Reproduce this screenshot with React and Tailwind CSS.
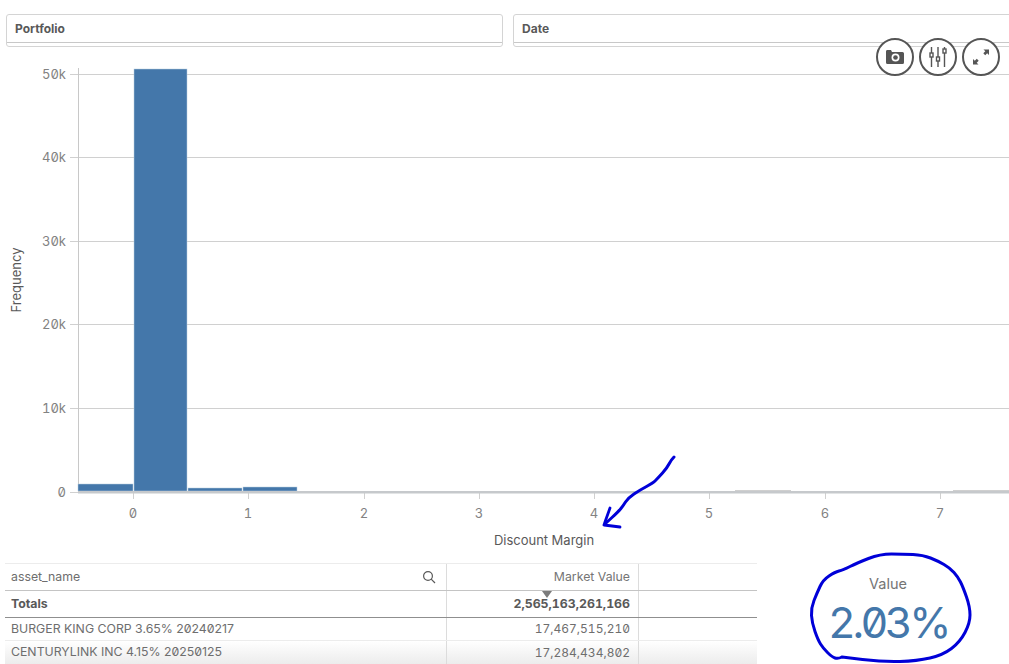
import React from "react";

const FONT = "font-['Inter','Liberation_Sans',sans-serif]";
const NUM = "'Inter','Liberation Sans',sans-serif";

const Y_TICKS = [
  ["50k", 18],
  ["40k", 101],
  ["30k", 185],
  ["20k", 268],
  ["10k", 352],
];
const X_TICKS = [
  ["0", 133],
  ["1", 248],
  ["2", 364],
  ["3", 479],
  ["4", 594],
  ["5", 709],
  ["6", 825],
  ["7", 940],
];
const BARS = [
  [78, 55, 428],
  [134, 53, 13],
  [188, 54, 432],
  [243, 54, 431],
];

// pen strokes, traced from the picture
const ARROW = [[674, 457], [671, 460], [667, 468], [658, 478], [653, 483], [640, 490], [628, 498], [623, 506], [618, 512], [606, 523]];
const CIRCLE = [[842, 657], [838, 659], [832, 657], [823, 648], [818, 640], [812, 623], [811, 608], [817, 593], [823, 580], [835, 572], [843, 570], [857, 563], [880, 554], [903, 554], [923, 555], [938, 561], [950, 568], [958, 577], [963, 587], [970, 607], [970, 623], [960, 642], [943, 655], [917, 661], [883, 662], [842, 657]];

// Helper: smooth a list of points through their midpoints
const smoothPath = (pts) => {
  let d = `M${pts[0][0]} ${pts[0][1]}`;
  for (let i = 1; i < pts.length - 1; i++) {
    const mx = (pts[i][0] + pts[i + 1][0]) / 2;
    const my = (pts[i][1] + pts[i + 1][1]) / 2;
    d += ` Q${pts[i][0]} ${pts[i][1]} ${mx} ${my}`;
  }
  const last = pts[pts.length - 1];
  return `${d} L${last[0]} ${last[1]}`;
};

const FilterBox = ({ label, className }) => (
  <div className={`h-[33px] shrink-0 rounded-[3px] border border-[#d4d4d4] bg-white ${className}`}>
    <div className="h-[28px] border-b border-[#c8c8c8] pl-2 pt-[6px] text-[12px] leading-4 font-bold text-[#595959]">
      {label}
    </div>
  </div>
);

const Histogram = () => (
  <svg width="1009" height="504" className="block shrink-0" style={{ fontFamily: NUM, fontVariantNumeric: "slashed-zero tabular-nums" }}>
    {Y_TICKS.map(([label, y]) => (
      <g key={label}>
        <line x1="70" x2="1009" y1={y + 0.5} y2={y + 0.5} stroke="#d0d0d0" />
        <text x="66" y={y + 5} textAnchor="end" fontSize="13" fill="#828282">{label}</text>
      </g>
    ))}
    <line x1="78.5" x2="78.5" y1="12" y2="436" stroke="#c8c8c8" />
    <line x1="70" x2="78" y1="436.5" y2="436.5" stroke="#d0d0d0" />
    <text x="66" y="441" textAnchor="end" fontSize="13" fill="#828282">0</text>
    {X_TICKS.map(([label, x]) => (
      <g key={label}>
        <line x1={x + 0.5} x2={x + 0.5} y1="436" y2="443" stroke="#d0d0d0" />
        <text x={x} y="462" textAnchor="middle" fontSize="13" fill="#828282">{label}</text>
      </g>
    ))}
    {BARS.map(([x, w, y]) => (
      <rect key={x} x={x} y={y} width={w} height={435 - y} fill="#4477aa" stroke="#b9cde0" strokeWidth="0.5" />
    ))}
    <rect x="735" y="434" width="56" height="3" fill="#cfcfcf" />
    <rect x="953" y="434" width="56" height="3" fill="#cfcfcf" />
    <rect x="78" y="435" width="931" height="2.5" fill="#c6c9cc" />
    <text x="544" y="489" textAnchor="middle" fontSize="13" fill="#595959">Discount Margin</text>
    <text transform="translate(21 224) rotate(-90)" textAnchor="middle" fontSize="13" fill="#595959">Frequency</text>
  </svg>
);

const Cell = ({ className = "", children }) => (
  <div className={`flex items-center overflow-hidden px-[6px] ${className}`}>{children}</div>
);

const ResultTable = () => (
  <div className="relative w-[752px] shrink-0 text-[12.3px] text-[#595959]">
    <div className="grid h-[28px] grid-cols-[442px_192px_118px] border-t border-b border-t-[#ececec] border-b-[#c4c4c4]">
      <Cell className="justify-between border-r border-[#dcdcdc] text-[#6e6e6e]">
        asset_name
        <svg width="14" height="14" viewBox="0 0 14 14" fill="none" stroke="#595959" strokeWidth="1.2" className="mr-[4px]">
          <circle cx="6" cy="6" r="4.4" />
          <path d="M9.2 9.2 13 13" />
        </svg>
      </Cell>
      <Cell className="justify-end border-r border-[#dcdcdc] pr-[8px] text-[#757575]">Market Value</Cell>
      <div />
    </div>
    <div className="relative grid h-[27px] grid-cols-[442px_192px_118px] border-b border-[#8f8f8f] font-bold">
      <Cell className="border-r border-[#dcdcdc]">Totals</Cell>
      <Cell className="justify-end border-r border-[#dcdcdc] pr-[8px] tabular-nums slashed-zero">2,565,163,261,166</Cell>
      <div />
      <div className="absolute top-0 left-[537px] h-0 w-0 border-x-[5px] border-t-[7px] border-x-transparent border-t-[#7b7b7b]" />
    </div>
    <div className="grid h-[23px] grid-cols-[442px_192px_118px] border-b border-[#ececec] text-[#6e6e6e]">
      <Cell className="border-r border-[#dcdcdc] slashed-zero">BURGER KING CORP 3.65% 20240217</Cell>
      <Cell className="justify-end border-r border-[#dcdcdc] pr-[8px] text-[12px] tabular-nums slashed-zero">17,467,515,210</Cell>
      <div />
    </div>
    <div className="grid h-[23px] grid-cols-[442px_192px_118px] bg-gradient-to-b from-white to-[#ececec] text-[#6e6e6e]">
      <Cell className="border-r border-[#dcdcdc] slashed-zero">CENTURYLINK INC 4.15% 20250125</Cell>
      <Cell className="justify-end border-r border-[#dcdcdc] pr-[8px] text-[12px] tabular-nums slashed-zero">17,284,434,802</Cell>
      <div />
    </div>
  </div>
);

const RoundButton = ({ children }) => (
  <div className="flex h-[38px] w-[38px] items-center justify-center rounded-full border-2 border-[#555555] bg-white">
    {children}
  </div>
);

const App = () => (
  <div className={`relative flex h-[664px] w-[1009px] flex-col overflow-hidden bg-white ${FONT}`}>
    <div className="flex gap-[10px] pt-[14px] pl-[6px]">
      <FilterBox label="Portfolio" className="w-[497px]" />
      <FilterBox label="Date" className="w-[510px]" />
    </div>

    <div className="mt-[9px]">
      <Histogram />
    </div>

    <div className="mt-[3px] flex pl-[5px]">
      <ResultTable />
      <div className="flex flex-1 flex-col items-center pt-[11px] pl-[10px]">
        <div className="text-[14.5px] leading-5 text-[#757575]">Value</div>
        <div className="mt-[3px] text-[43px] leading-[50px] tracking-[-3.5px] text-[#4477aa] tabular-nums slashed-zero">2.03%</div>
      </div>
    </div>

    {/* buttons over the chart */}
    <div className="absolute top-[38px] left-[876px] flex gap-[5px]">
      <RoundButton>
        <svg width="20" height="16" viewBox="0 0 20 16">
          <path fillRule="evenodd" fill="#555555" d="M2 1h4l1 2h10.500q1.500 0 1.500 1.500v9q0 1.500-1.500 1.500h-15Q1 15 1 13.500v-11Q1 1 2 1ZM10.500 4.500a4 4 0 1 0 0 8 4 4 0 0 0 0-8Z" />
          <circle cx="10.500" cy="8.500" r="2.300" fill="#555555" />
        </svg>
      </RoundButton>
      <RoundButton>
        <svg width="18" height="22" viewBox="0 0 18 22" fill="none" stroke="#555555" strokeWidth="1.400">
          <path d="M2.500 1v6M2.500 11v10M9 1v10M9 15v6M15.500 1v2M15.500 7v14" />
          <rect x="1" y="7" width="3" height="4" />
          <rect x="7.500" y="11" width="3" height="4" />
          <rect x="14" y="3" width="3" height="4" />
        </svg>
      </RoundButton>
      <RoundButton>
        <svg width="20" height="20" viewBox="0 0 20 20" fill="#555555">
          <path d="M12.500 2.500h5.500v5.500l-1.800-1.800-2 2-1.900-1.900 2-2ZM7.500 17.500H2v-5.500l1.800 1.800 2-2 1.900 1.900-2 2Z" />
        </svg>
      </RoundButton>
    </div>

    {/* pen annotations drawn on top of the screenshot */}
    <svg width="1009" height="664" className="pointer-events-none absolute top-0 left-0" fill="none" stroke="#0000d8" strokeLinecap="round" strokeLinejoin="round">
      <path strokeWidth="3" d={smoothPath(ARROW)} />
      <path strokeWidth="2.800" d="M610 508 L605 522 L604 525 L620 527" />
      <path strokeWidth="3" d={smoothPath(CIRCLE)} />
    </svg>
  </div>
);

export default App;
